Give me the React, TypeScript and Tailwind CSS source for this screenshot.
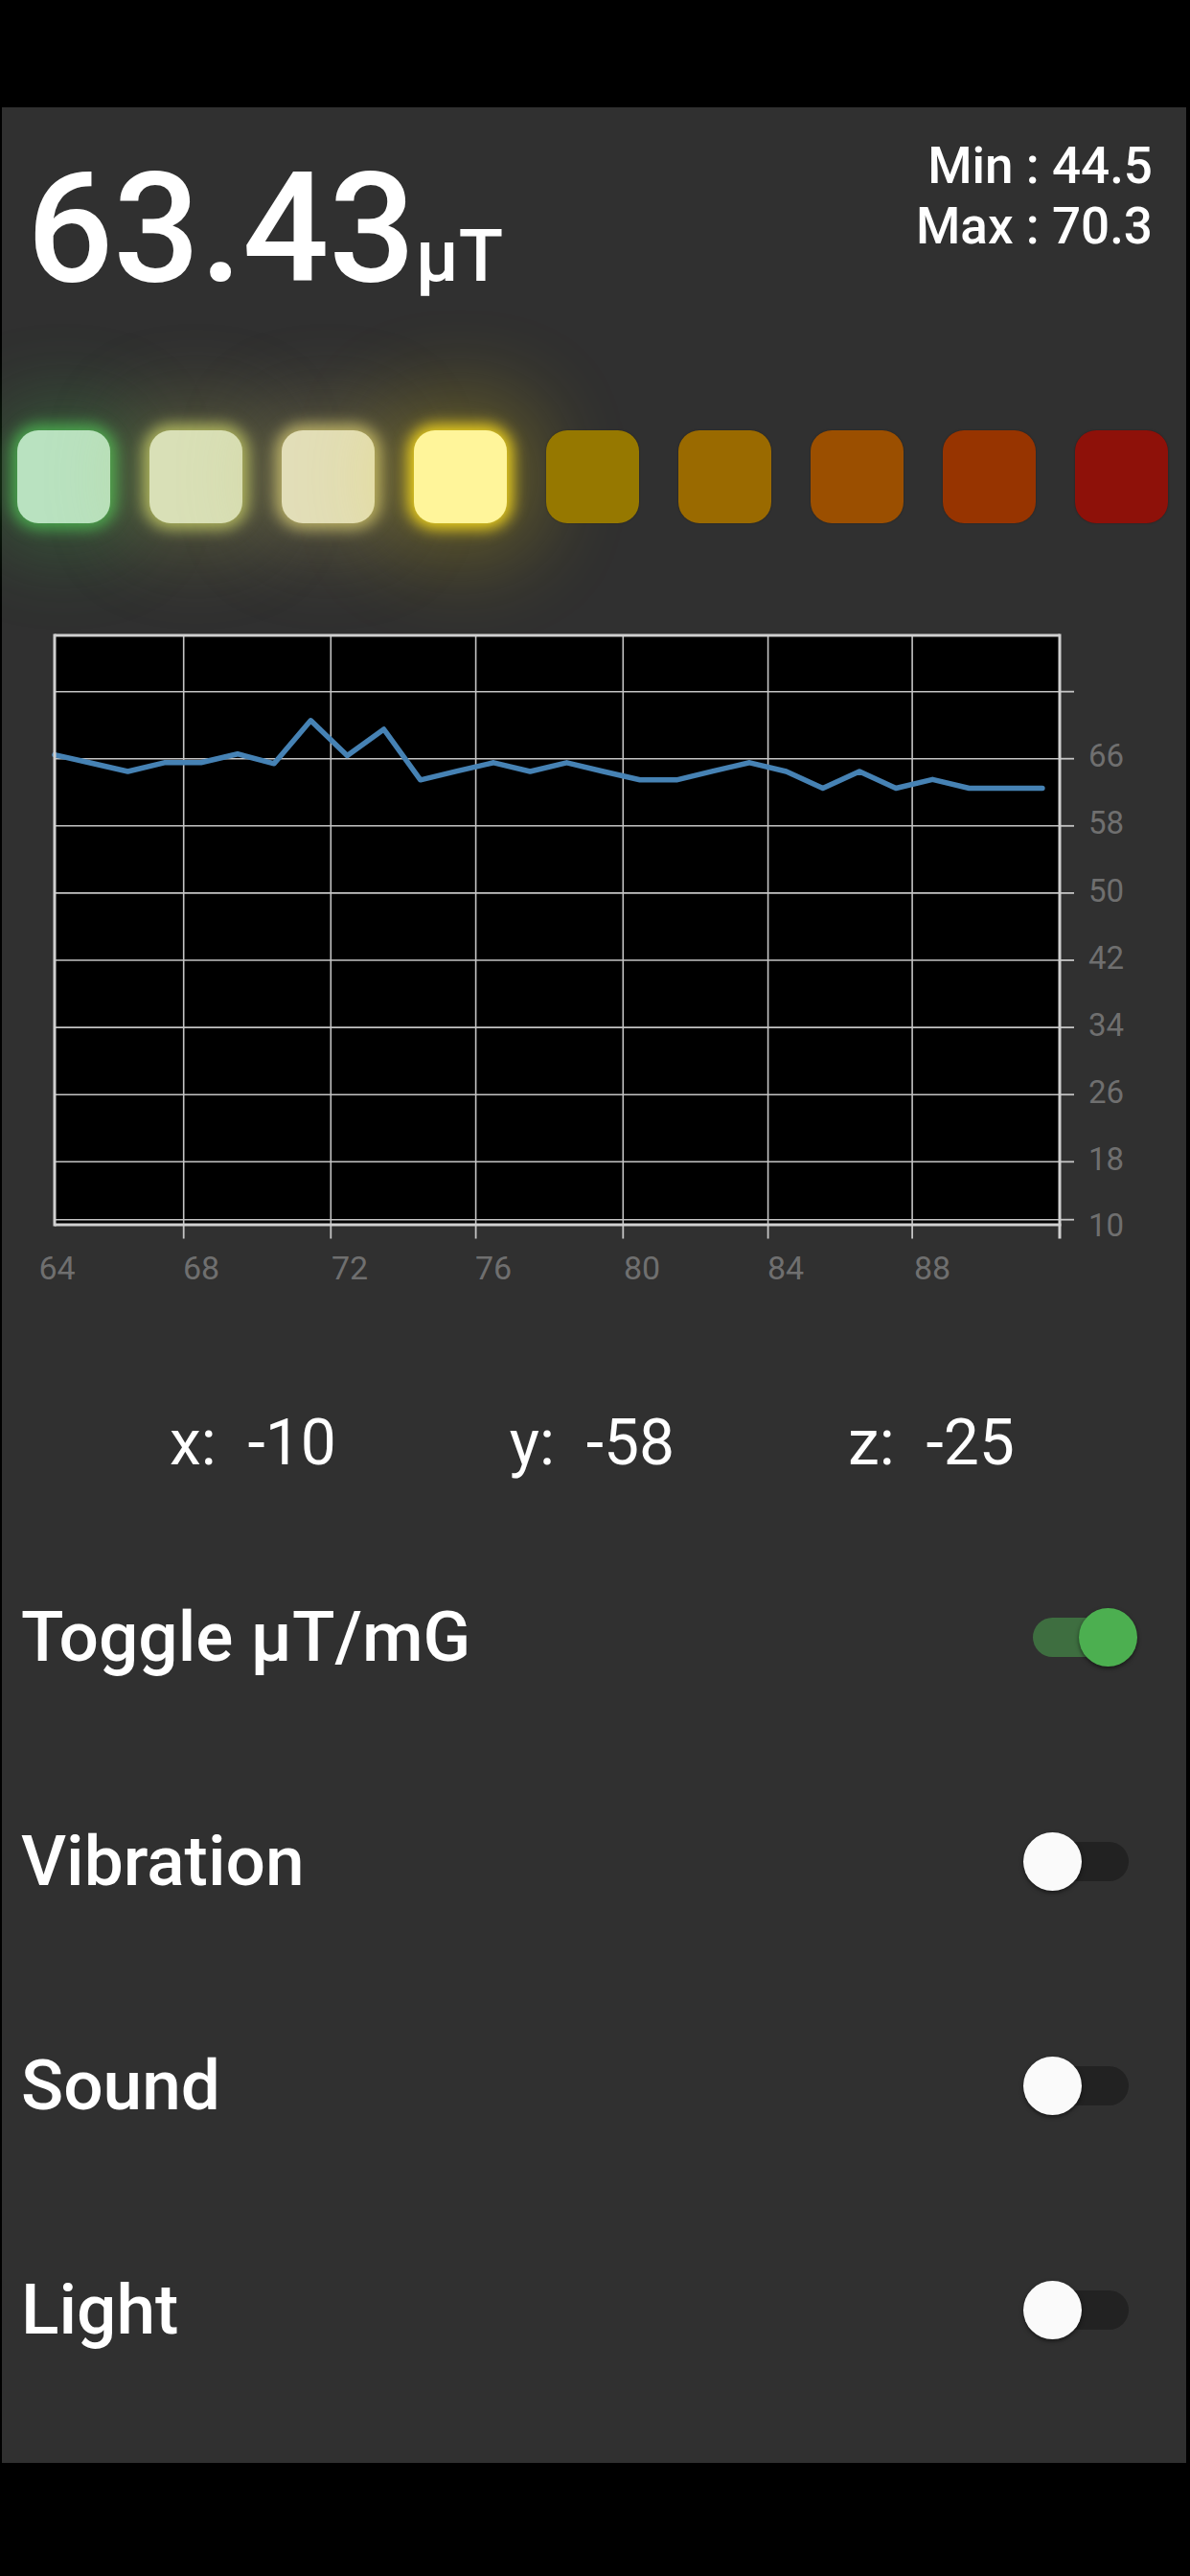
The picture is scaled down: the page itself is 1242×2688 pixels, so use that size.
import { FC } from "react";

const squares = [
  { bg: "bg-[#b9e2c0]", glow: "shadow-[0_0_16px_6px_rgba(76,175,80,0.95),0_0_80px_30px_rgba(76,175,80,0.3)]" },
  { bg: "bg-[#d9e0b7]", glow: "shadow-[0_0_16px_6px_rgba(190,196,100,0.9),0_0_80px_30px_rgba(190,196,100,0.26)]" },
  { bg: "bg-[#e2deb8]", glow: "shadow-[0_0_16px_6px_rgba(200,190,110,0.9),0_0_80px_30px_rgba(200,190,110,0.26)]" },
  { bg: "bg-[#fff59a]", glow: "shadow-[0_0_16px_6px_rgba(245,216,30,0.95),0_0_90px_34px_rgba(245,216,30,0.28)]" },
  { bg: "bg-[#967800]", glow: "shadow-[0_0_2px_rgba(0,0,0,0.35)]" },
  { bg: "bg-[#9a6a00]", glow: "shadow-[0_0_2px_rgba(0,0,0,0.35)]" },
  { bg: "bg-[#9b4f00]", glow: "shadow-[0_0_2px_rgba(0,0,0,0.35)]" },
  { bg: "bg-[#973400]", glow: "shadow-[0_0_2px_rgba(0,0,0,0.35)]" },
  { bg: "bg-[#8e1109]", glow: "shadow-[0_0_2px_rgba(0,0,0,0.35)]" },
];

// chart geometry, in page pixels
const left = 57;
const right = 1106;
const top = 663;
const bottom = 1278;
const rows = [721.7, 791.7, 861.8, 931.9, 1002, 1072.1, 1142.2, 1212.3, 1272.7];
const cols = [191.7, 345.3, 496.6, 650.3, 801.6, 952.1];
const yLabels = [
  { v: "66", y: 800 },
  { v: "58", y: 870 },
  { v: "50", y: 940.5 },
  { v: "42", y: 1010.5 },
  { v: "34", y: 1080.5 },
  { v: "26", y: 1150.5 },
  { v: "18", y: 1221 },
  { v: "10", y: 1289.5 },
];
const xLabels = [
  { v: "64", x: 59.5 },
  { v: "68", x: 210 },
  { v: "72", x: 365 },
  { v: "76", x: 515 },
  { v: "80", x: 670 },
  { v: "84", x: 820 },
  { v: "88", x: 973 },
];
const data = [
  787.6, 796.3, 805, 795.8, 795.8, 786.7, 796.8, 751.8, 788.5, 761, 813.8, 804.6, 795.8, 805,
  795.8, 805, 813.8, 813.8, 804.6, 795.8, 805, 822.5, 805, 822.5, 813.3, 822.5, 822.5, 822.5,
];

const Chart: FC = () => {
  const points = data.map((y, i) => `${(left + i * 38.18).toFixed(1)},${y}`).join(" ");
  return (
    <svg
      width={1236}
      height={710}
      viewBox="2 640 1236 710"
      className="block"
      style={{ fontFamily: "Roboto, sans-serif" }}
    >
      <rect x={left} y={top} width={right - left} height={bottom - top} fill="#000" />
      {rows.map((y) => (
        <g key={y}>
          <line x1={left} x2={right} y1={y} y2={y} stroke="#c4c4c4" strokeWidth={1.6} />
          <line x1={right} x2={1121} y1={y} y2={y} stroke="#c4c4c4" strokeWidth={1.8} />
        </g>
      ))}
      {cols.map((x) => (
        <g key={x}>
          <line x1={x} x2={x} y1={top} y2={bottom} stroke="#c4c4c4" strokeWidth={1.6} />
          <line x1={x} x2={x} y1={bottom} y2={1292.5} stroke="#c4c4c4" strokeWidth={1.8} />
        </g>
      ))}
      <polyline
        points={points}
        fill="none"
        stroke="#4682b4"
        strokeWidth={5.5}
        strokeLinejoin="round"
        strokeLinecap="round"
      />
      <line x1={left} x2={right} y1={top} y2={top} stroke="#d0d0d0" strokeWidth={3} />
      <line x1={left} x2={right + 1.5} y1={bottom} y2={bottom} stroke="#d0d0d0" strokeWidth={3} />
      <line x1={left} x2={left} y1={top - 1.5} y2={bottom + 1.5} stroke="#d0d0d0" strokeWidth={3} />
      <line x1={right} x2={right} y1={top - 1.5} y2={1292.5} stroke="#d0d0d0" strokeWidth={3} />
      {yLabels.map((l) => (
        <text key={l.v} x={1136} y={l.y} fontSize={33} fill="#6f6f6f">
          {l.v}
        </text>
      ))}
      {xLabels.map((l) => (
        <text key={l.v} x={l.x} y={1335} fontSize={34} fill="#6f6f6f" textAnchor="middle">
          {l.v}
        </text>
      ))}
    </svg>
  );
};

const Switch: FC<{ on?: boolean }> = ({ on }) => (
  <div className="relative w-[119px] h-[61px] shrink-0">
    <div
      className={
        "absolute left-[10px] top-[10px] w-[100px] h-[41px] rounded-full " +
        (on ? "bg-[#3e6e40]" : "bg-[#222222]")
      }
    />
    <div
      className={
        "absolute top-0 w-[61px] h-[61px] rounded-full shadow-[0_2px_4px_rgba(0,0,0,0.5)] " +
        (on ? "left-[58px] bg-[#4caf50]" : "left-0 bg-[#fafafa]")
      }
    />
  </div>
);

const SettingRow: FC<{ label: string; on?: boolean }> = ({ label, on }) => (
  <div className="h-[234px] flex items-center justify-between pl-[20px] pr-[51px]">
    <span className="text-[73px] leading-none font-medium text-white">{label}</span>
    <Switch on={on} />
  </div>
);

export default function App() {
  return (
    <div className="w-[1242px] h-[2688px] bg-black flex flex-col font-['Roboto',sans-serif] text-white">
      <div className="h-[112px] shrink-0" />

      <main className="ml-[2px] mr-[4px] h-[2458px] bg-[#303030] flex flex-col">
        <header className="h-[207px] flex justify-between items-start">
          <div className="pl-[26px] pt-[47px] flex items-baseline">
            <span className="text-[159px] leading-none font-medium">63.43</span>
            <span className="text-[76px] leading-none font-medium">µT</span>
          </div>
          <div className="pr-[35px] pt-[30px] text-right text-[53px] leading-[63px] font-medium">
            <div>Min : 44.5</div>
            <div>Max : 70.3</div>
          </div>
        </header>

        <div className="mt-[130px] pl-[16px] flex gap-[41px]">
          {squares.map((s, i) => (
            <div key={i} className={"w-[97px] h-[97px] rounded-[22px] shrink-0 " + s.bg + " " + s.glow} />
          ))}
        </div>

        <div className="mt-[94px]">
          <Chart />
        </div>

        <div className="mt-[123px] ml-[85px] grid grid-cols-[354px_354px_354px] text-[66px] leading-none">
          <span className="text-center whitespace-pre">x:  -10</span>
          <span className="text-center whitespace-pre">y:  -58</span>
          <span className="text-center whitespace-pre">z:  -25</span>
        </div>

        <div className="mt-[52px] flex flex-col">
          <SettingRow label="Toggle µT/mG" on />
          <SettingRow label="Vibration" />
          <SettingRow label="Sound" />
          <SettingRow label="Light" />
        </div>
      </main>
    </div>
  );
}
